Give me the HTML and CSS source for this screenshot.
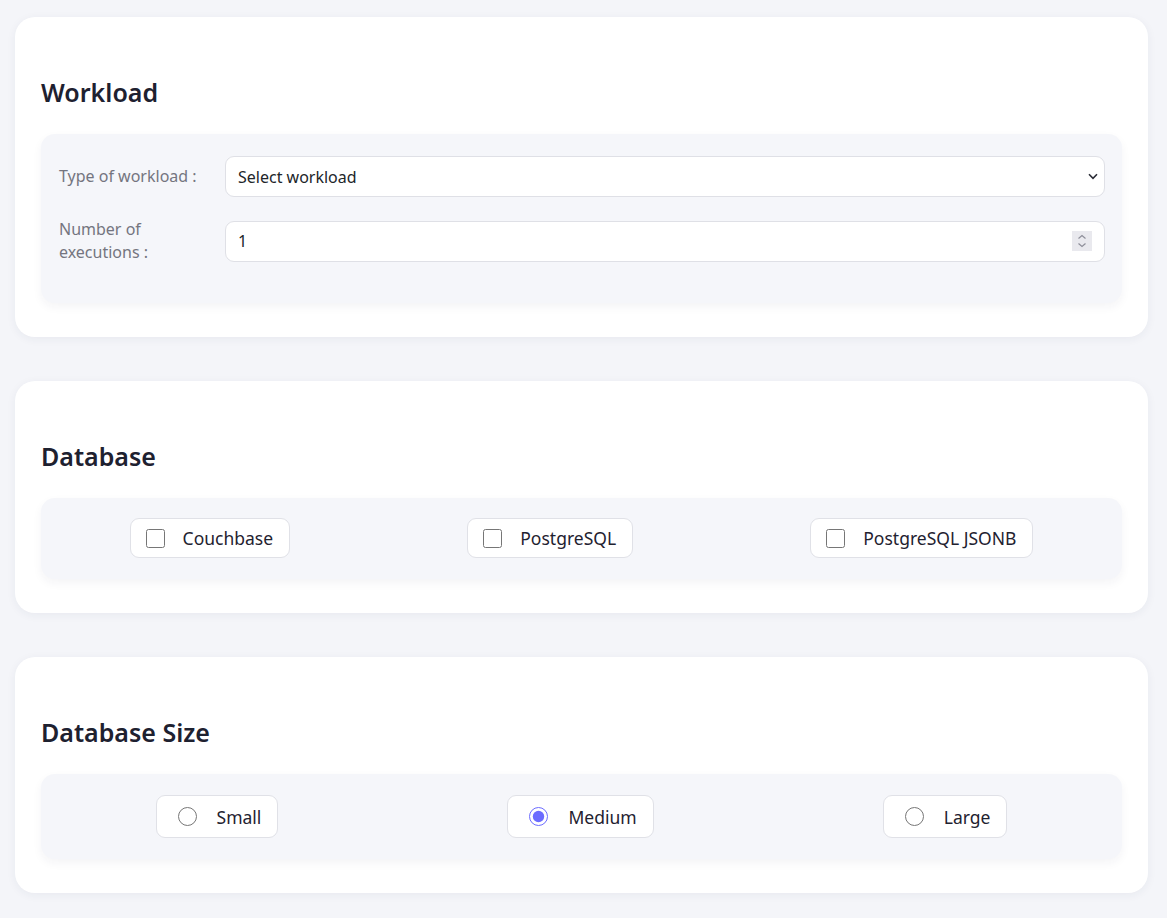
FILE: index.html
```html
<!DOCTYPE html>
<html lang="en">
<head>
<meta charset="utf-8">
<title>Benchmark configuration</title>
<link rel="stylesheet" href="styles.css">
</head>
<body>
<main class="page">
  <section class="card">
    <h2 class="card-title">Workload</h2>
    <div class="panel panel-form">
      <div class="form-row">
        <label class="form-label" for="workload">Type of workload :</label>
        <div class="field">
          <select id="workload" class="form-control">
            <option>Select workload</option>
          </select>
          <svg class="select-arrow" width="10" height="7" viewBox="0 0 10 7" aria-hidden="true">
            <path d="M1 1.3 L5 5.3 L9 1.3" fill="none" stroke="#2a2c36" stroke-width="1.6"/>
          </svg>
        </div>
      </div>
      <div class="form-row">
        <label class="form-label" for="executions">Number of executions :</label>
        <div class="field">
          <input id="executions" class="form-control number" type="number" value="1" min="1">
          <span class="spinner" aria-hidden="true">
            <svg width="20" height="20" viewBox="0 0 20 20">
              <path d="M6.5 7.5 L10 4.5 L13.5 7.5" fill="none" stroke="#8d8e99" stroke-width="1.2"/>
              <path d="M6.5 12.5 L10 15.5 L13.5 12.5" fill="none" stroke="#8d8e99" stroke-width="1.2"/>
            </svg>
          </span>
        </div>
      </div>
    </div>
  </section>

  <section class="card">
    <h2 class="card-title">Database</h2>
    <div class="panel panel-options panel-checks">
      <label class="option check"><input type="checkbox"><span>Couchbase</span></label>
      <label class="option check"><input type="checkbox"><span>PostgreSQL</span></label>
      <label class="option check"><input type="checkbox"><span>PostgreSQL JSONB</span></label>
    </div>
  </section>

  <section class="card">
    <h2 class="card-title">Database Size</h2>
    <div class="panel panel-options panel-radios">
      <label class="option radio"><input type="radio" name="size"><span>Small</span></label>
      <label class="option radio"><input type="radio" name="size" checked><span>Medium</span></label>
      <label class="option radio"><input type="radio" name="size"><span>Large</span></label>
    </div>
  </section>
</main>
</body>
</html>
```

FILE: styles.css
```css
* { box-sizing: border-box; }

html, body {
  margin: 0;
  background: #f4f5f9;
}

body {
  font-family: "Noto Sans", "Open Sans", sans-serif;
  color: #212529;
  overflow: hidden;
}

.page {
  padding: 17px 19px 0 15px;
}

.card {
  background: #ffffff;
  border-radius: 20px;
  padding: 34px 26px;
  margin-bottom: 44px;
  box-shadow: 0 2px 10px rgba(40, 45, 80, 0.06);
}

.card-title {
  margin: 25px 0 26px;
  font-size: 25px;
  line-height: 32px;
  font-weight: 600;
  color: #1e2130;
}

.panel {
  background: #f5f6fa;
  border-radius: 14px;
  box-shadow: 0 4px 10px rgba(40, 45, 80, 0.05);
}

.panel-form {
  padding: 22px 17px 18px 18px;
}

.form-row {
  display: flex;
  align-items: center;
  min-height: 41px;
}

.form-row + .form-row {
  margin-top: 21px;
  margin-bottom: 21px;
}

.form-label {
  flex: 0 0 166px;
  padding-right: 10px;
  font-size: 16px;
  line-height: 23px;
  color: #74757f;
}

.field {
  position: relative;
  flex: 1 1 auto;
  display: flex;
}

.form-control {
  flex: 1 1 auto;
  width: 100%;
  height: 41px;
  border: 1px solid #dfe0e6;
  border-radius: 9px;
  background: #ffffff;
  font-family: inherit;
  font-size: 16px;
  color: #212529;
  padding: 0 12px;
  outline: none;
}

select.form-control {
  appearance: none;
  -webkit-appearance: none;
  padding-left: 12px;
}

.select-arrow {
  position: absolute;
  right: 7px;
  top: 17px;
  pointer-events: none;
}

.number {
  -moz-appearance: textfield;
}

.number::-webkit-inner-spin-button,
.number::-webkit-outer-spin-button {
  -webkit-appearance: none;
  margin: 0;
}

.spinner {
  position: absolute;
  right: 13px;
  top: 10px;
  width: 20px;
  height: 20px;
  background: #e9e9ee;
  pointer-events: none;
}

.spinner svg {
  display: block;
}

.panel-options {
  display: flex;
  justify-content: space-around;
  align-items: center;
}

.panel-checks {
  padding: 20px 0 21px;
}

.panel-radios {
  padding: 21px 0 21px;
}

.option {
  display: flex;
  align-items: center;
  background: #ffffff;
  border: 1px solid #e0e1e7;
  border-radius: 9px;
  font-size: 17.5px;
  color: #1f2230;
  cursor: pointer;
}

.option.check {
  height: 40px;
  padding: 0 16px 0 15px;
}

.option.radio {
  height: 43px;
  padding: 0 16px 0 21px;
}

.option input {
  margin: 0;
  accent-color: #6c6cff;
}

.check input {
  width: 19px;
  height: 19px;
  margin-right: 18px;
}

.radio input {
  width: 19px;
  height: 19px;
  margin-right: 20px;
}
```
